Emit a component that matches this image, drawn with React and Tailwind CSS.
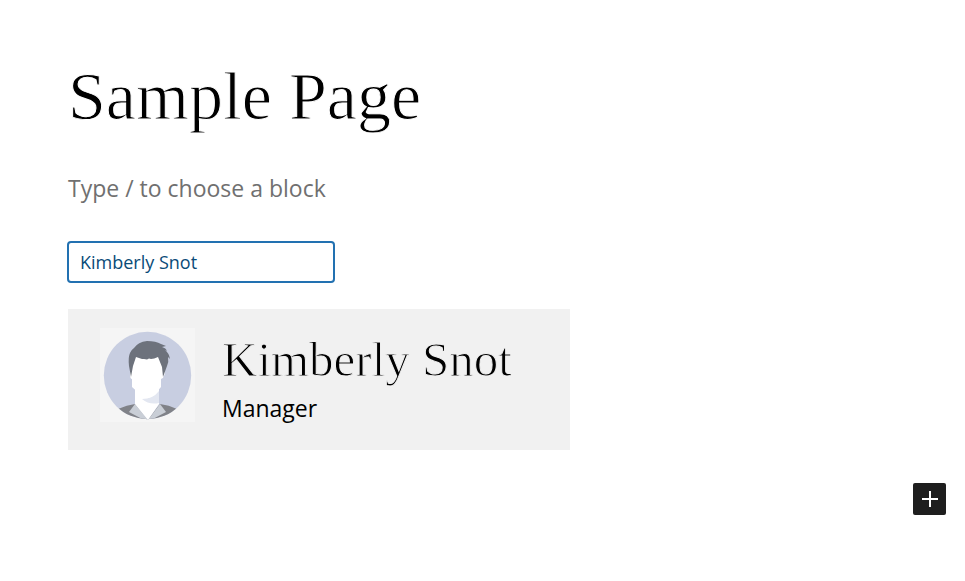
import { useState } from "react";

function Avatar() {
  return (
    <svg viewBox="0 0 95 94" className="h-[94px] w-[95px] shrink-0" role="img" aria-label="Profile picture">
      <defs>
        <clipPath id="portrait">
          <circle cx="47.5" cy="47.5" r="43.7" />
        </clipPath>
      </defs>
      <rect width="95" height="94" fill="#f5f5f5" />
      <g clipPath="url(#portrait)">
        <rect width="95" height="94" fill="#c8cee1" />
        <path d="M10 94L18 81Q27 77 35 76L47.500 92L60 76Q69 77 77 81L86 94Z" fill="#808288" />
        <path d="M35 76L29 84L44 92H48Z" fill="#c9ced6" />
        <path d="M60 76L66 84L51 92H48Z" fill="#c9ced6" />
        <path d="M35 60H59V76L48 92L35 76Z" fill="#fff" />
        <path d="M42 71Q53 71 59 63V75Q49 77 42 71Z" fill="#e3e7f1" />
        <path d="M31 28H64V42Q66 43 64 48Q63 51 61 51V59L54 67Q48 73 41 67L32 59V51Q30 51 30 46V42Z" fill="#fff" />
        <path d="M31 49L29 38Q28 29 30 25Q31 22 34 20Q38 14 47 13Q56 13 61 16L66 18L62 19Q66 20 67 23L65 22Q69 25 70 31L68 29Q69 34 67 38L63 49L62 39L58 29Q54 31 51 31L49 30.500L47 31.500L44 31L42 31L36 29L33 38Z" fill="#6d727c" />
      </g>
    </svg>
  );
}

export default function App() {
  const [name, setName] = useState("Kimberly Snot");

  return (
    <main className="min-h-screen bg-white pt-14 pr-5 pb-16 pl-17 font-['Open_Sans','Noto_Sans',sans-serif] text-black">
      <h1 className="font-['Liberation_Serif',serif] text-[68px] leading-20 [-webkit-text-stroke:1px_white]">
        Sample Page
      </h1>
      <p className="mt-9 text-[23px] leading-8 text-[#707070]">Type / to choose a block</p>
      <input
        type="text"
        aria-label="Name"
        value={name}
        onChange={(event) => setName(event.target.value)}
        className="-ml-px mt-[37px] block h-[42px] w-[268px] rounded border-2 border-[#2271b1] bg-white px-[11px] text-[18px] text-[#0a4b78] outline-none"
      />
      <section className="mt-[26px] flex h-[141px] w-full max-w-[502px] gap-[27px] bg-[#f1f1f1] pt-[19px] pl-8">
        <Avatar />
        <div className="pt-1">
          <h2 className="font-['Liberation_Serif',serif] text-[49px] leading-14 [-webkit-text-stroke:1px_#f1f1f1]">
            {name}
          </h2>
          <p className="text-[23px] leading-10">Manager</p>
        </div>
      </section>
      <div className="mt-[33px] flex justify-end">
        <button
          type="button"
          aria-label="Add block"
          className="mr-[-1px] flex h-8 w-[33px] items-center justify-center rounded-xs bg-[#1e1e1e] text-white"
        >
          <svg viewBox="0 0 18 18" className="size-[18px]" fill="none" stroke="currentColor" strokeWidth="2">
            <path d="M9 1V17M1 9H17" />
          </svg>
        </button>
      </div>
    </main>
  );
}
